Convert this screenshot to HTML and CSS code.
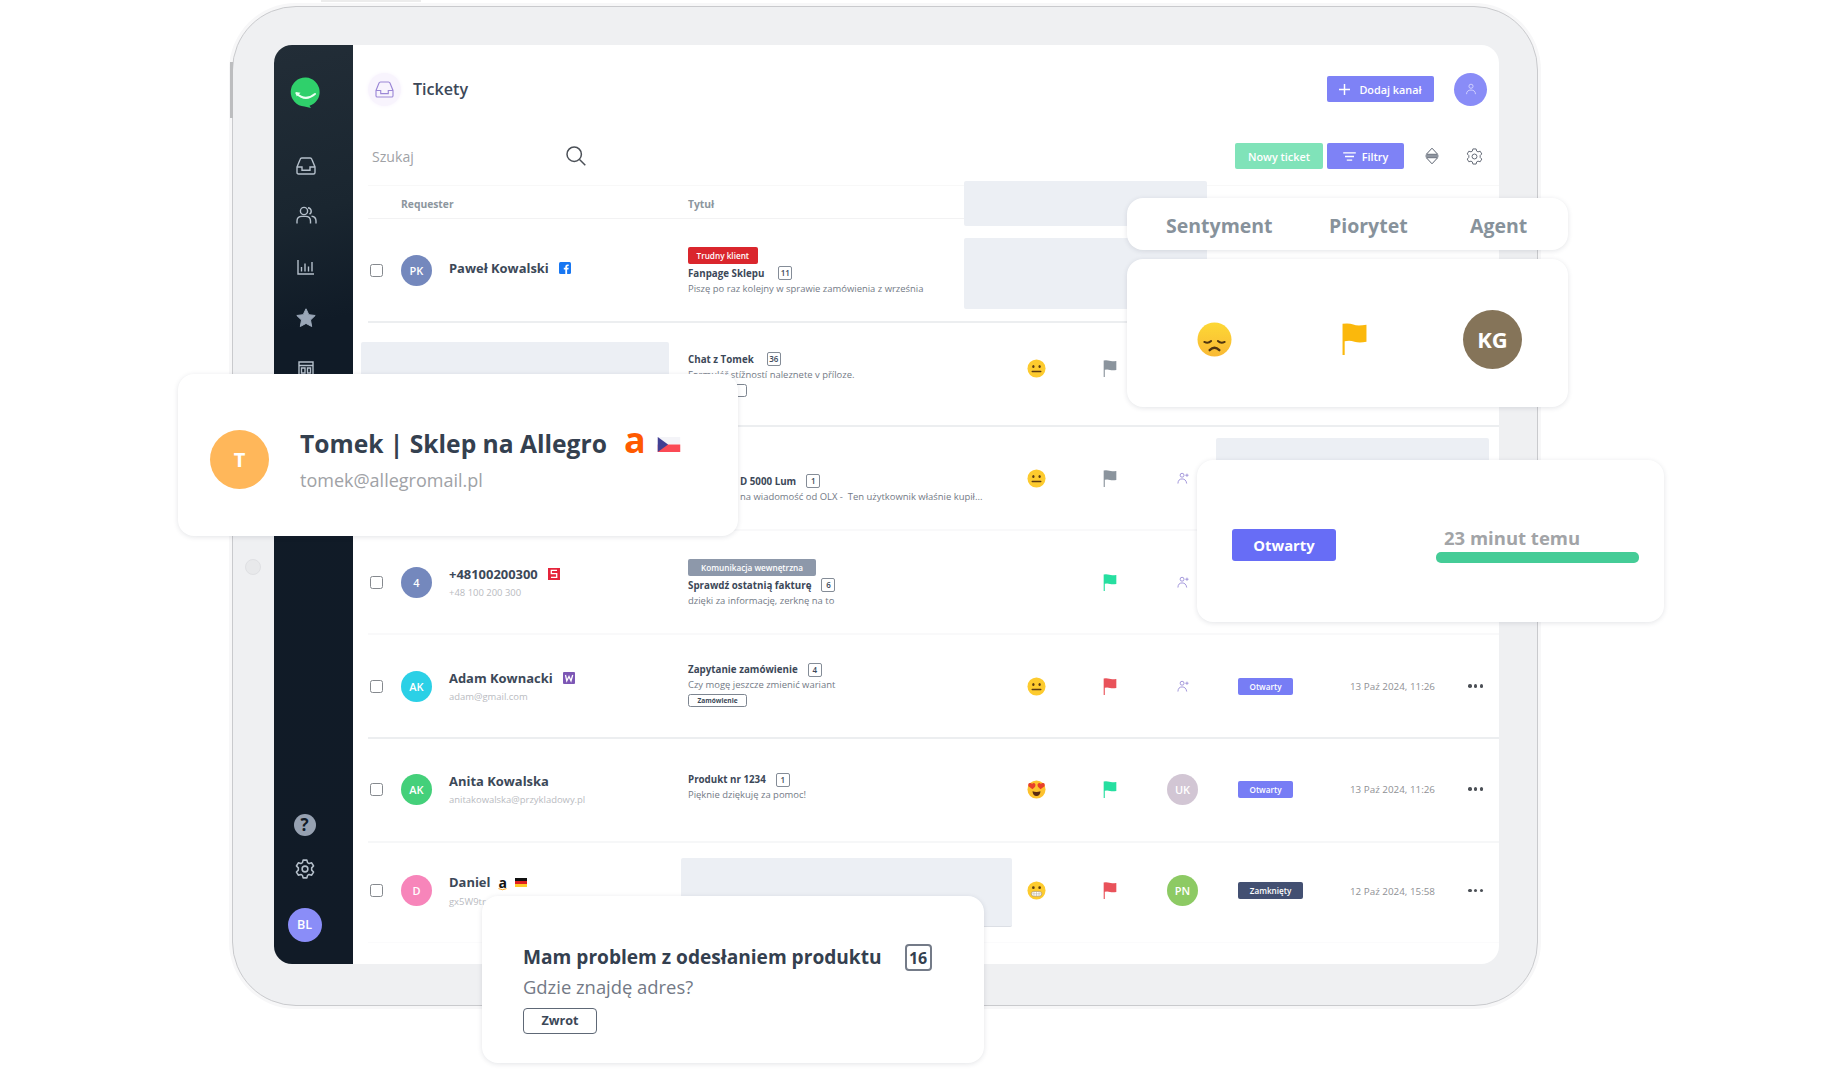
FILE: index.html
```html
<!DOCTYPE html>
<html lang="pl">
<head>
<meta charset="utf-8">
<title>Tickety</title>
<link rel="stylesheet" href="styles.css">
</head>
<body>
<svg class="sprite" aria-hidden="true">
  <symbol id="inbox" viewBox="0 0 20 18"><path d="M1 10 4.2 2.2Q4.6 1 5.8 1h8.400Q15.400 1 15.800 2.200L19 10v5.500Q19 17 17.500 17h-15Q1 17 1 15.500zM1 10h5v3.300h8V10h5"/></symbol>
  <symbol id="users" viewBox="0 0 21 18"><circle cx="8" cy="5" r="3.600"/><path d="M1 17.500v-2.500q0-4.600 5-4.600h3.500q5 0 5 4.600v2.500M12 1.700a3.500 3.500 0 0 1 1.500 6.500M15.500 10.200q4.500.3 4.500 4.800v2.500"/></symbol>
  <symbol id="chart" viewBox="0 0 17 15"><path d="M1 0v14h16M4.500 11.500V7M8 11.500V3.500M11.500 11.500V6.500M15 11.500V2"/></symbol>
  <symbol id="star" viewBox="0 0 20 20"><path d="m10 .8 2.800 5.900 6.400.8-4.700 4.500 1.200 6.500L10 15.400l-5.700 3.100 1.200-6.500L.8 7.500l6.400-.8z" stroke-linejoin="round"/></symbol>
  <symbol id="board" viewBox="0 0 16 16"><path d="M1 1h14v14H1zM1 4.500h14M3.500 7h3.500v5H3.500zM9.500 7H12.500v5H9.500z"/></symbol>
  <symbol id="gear" viewBox="0 0 18 18"><path d="m7.300 1h3.400l.6 2.300 1.400.8 2.300-.7 1.700 2.900-1.700 1.700v2l1.700 1.700-1.700 2.900-2.300-.7-1.400.8-.6 2.300H7.300l-.6-2.300-1.400-.8-2.300.7-1.700-2.900L3 10V8L1.300 6.300 3 3.400l2.300.7 1.400-.8z" stroke-linejoin="round"/><circle cx="9" cy="9" r="2.600"/></symbol>
  <symbol id="search" viewBox="0 0 20 20"><circle cx="8.200" cy="8.200" r="7.200"/><path d="m13.500 13.500 5.800 5.800"/></symbol>
  <symbol id="person" viewBox="0 0 14 14"><circle cx="7" cy="3.800" r="2.400"/><path d="M1.800 13Q2 8.200 7 8.200T12.200 13"/></symbol>
  <symbol id="assign" viewBox="0 0 13 13"><circle cx="5.500" cy="3.500" r="2.100"/><path d="M1 12.500Q1.200 7.500 5.500 7.500T10.500 12.500M9 3.500h3.500M10.800 1.800v3.400"/></symbol>
  <symbol id="sort" viewBox="0 0 14 18"><path d="M7 1.200 1.300 7.300h11.400zM7 16.800 1.300 10.700h11.400z" stroke-linejoin="round"/><path d="M.5 9h13" stroke="#8f959f" stroke-width="2"/></symbol>
  <symbol id="flag" viewBox="0 0 14 18"><path d="M.3.5Q4 0 6.300.9T13.700 1v9.500q-4 .9-6.700 0T1.500 10.300V18H.3z"/></symbol>
  <symbol id="neutral" viewBox="0 0 20 20"><circle cx="10" cy="10" r="9.500" fill="#fdcb2e"/><ellipse cx="6.700" cy="7.800" rx="1.200" ry="1.600" fill="#5b3b12"/><ellipse cx="13.300" cy="7.800" rx="1.200" ry="1.600" fill="#5b3b12"/><path d="M5.500 13.200h9" stroke="#5b3b12" stroke-width="1.500" stroke-linecap="round"/></symbol>
  <symbol id="love" viewBox="0 0 20 20"><circle cx="10" cy="10" r="9.500" fill="#fdc22e"/><path d="M5.800 9.800 1.500 6.500Q.6 3.600 3 3.200q1.600-.2 2.300 1Q6.500 2.800 8 3.500q1.800 1.300.5 3.500zM14.200 9.800l4.300-3.300q.9-2.900-1.500-3.300-1.600-.2-2.300 1-1.200-1.400-2.700-.7-1.800 1.300-.5 3.500z" fill="#e8402a"/><path d="M5.800 11.800q4.200 1.400 8.400 0-.3 5-4.200 5t-4.200-5z" fill="#5b2b12"/></symbol>
  <symbol id="grimace" viewBox="0 0 20 20"><circle cx="10" cy="10" r="9.500" fill="#fdcb2e"/><circle cx="6.700" cy="7" r="1.400" fill="#5b3b12"/><circle cx="13.300" cy="7" r="1.400" fill="#5b3b12"/><rect x="4.500" y="11" width="11" height="5" rx="2.500" fill="#fff" stroke="#a08560" stroke-width=".6"/><path d="M4.500 13.500h11M7.300 11v5M10 11v5M12.700 11v5" stroke="#b8b0a0" stroke-width=".6"/></symbol>
</svg>

<div class="stage">
  <div class="device">
    <span class="side-button"></span><span class="camera"></span><span class="top-button b1"></span><span class="top-button b2"></span>
    <div class="screen">
      <nav class="sidebar">
        <svg class="logo" viewBox="0 0 30 31"><path d="M15 .5a14.500 14.500 0 0 1 3.500 28.300L20 31l-6.500-1.500A14.500 14.500 0 0 1 15 .5z" fill="#2fd06b"/><path d="M5.500 16.500q9 8.500 18.500.5" fill="none" stroke="#eafff2" stroke-width="2" stroke-linecap="round"/><path d="m4.500 15 5 .8-3.800 3.600z" fill="#eafff2"/></svg>
        <svg class="ic nav-inbox"><use href="#inbox"/></svg>
        <svg class="ic nav-users"><use href="#users"/></svg>
        <svg class="ic nav-chart"><use href="#chart"/></svg>
        <svg class="nav-star"><use href="#star"/></svg>
        <svg class="ic nav-board"><use href="#board"/></svg>
        <span class="help">?</span>
        <svg class="ic nav-gear"><use href="#gear"/></svg>
        <span class="me">BL</span>
      </nav>
      <main class="main">
        <header class="topbar">
          <span class="title-icon"><svg><use href="#inbox"/></svg></span>
          <h1>Tickety</h1>
          <button class="btn add"><svg viewBox="0 0 12 12"><path d="M6 0v12M0 6h12"/></svg>Dodaj kanał</button>
          <span class="profile"><svg><use href="#person"/></svg></span>
        </header>
        <div class="toolbar">
          <div class="search">Szukaj<svg><use href="#search"/></svg></div>
          <button class="btn new">Nowy ticket</button>
          <button class="btn filter"><svg viewBox="0 0 14 10"><path d="M0 1h14M2 5h10M4 9h6"/></svg>Filtry</button>
          <svg class="tool sort"><use href="#sort"/></svg>
          <svg class="tool gear"><use href="#gear"/></svg>
        </div>
        <div class="table">
          <div class="row head"><span class="h-req">Requester</span><span class="h-title">Tytuł</span><i class="ph ph-head"></i></div>

          <div class="row">
            <i class="check"></i><span class="avatar blue">PK</span>
            <div class="who single"><div class="name">Paweł Kowalski<svg class="src" viewBox="0 0 12 12"><rect width="12" height="12" rx="1.500" fill="#1877f2"/><path d="M6.300 12V7.500H4.800V5.700h1.500V4.600q0-2.200 2.200-2.200h1.200v1.700H8.900q-.8 0-.8.8v.8h1.600l-.3 1.800H8.100V12z" fill="#fff"/></svg></div></div>
            <div class="topic labelled"><span class="label red">Trudny klient</span><div class="subject">Fanpage Sklepu<b class="count wide">11</b></div><p>Piszę po raz kolejny w sprawie zamówienia z września</p></div>
            <i class="ph ph-one"></i>
          </div>

          <div class="row second">
            <i></i><i></i><div class="who"></div>
            <div class="topic"><div class="subject">Chat z Tomek<b class="count wide">36</b></div><p>Formulář stížností naleznete v příloze.</p><span class="tag"></span></div>
            <svg class="emoji"><use href="#neutral"/></svg><svg class="flag grey"><use href="#flag"/></svg>
            <i class="ph ph-two"></i>
          </div>

          <div class="row faint third">
            <i></i><i></i><div class="who"></div>
            <div class="topic"><div class="subject">D 5000 Lum<b class="count">1</b></div><p>na wiadomość od OLX -&nbsp; Ten użytkownik właśnie kupił...</p></div>
            <svg class="emoji"><use href="#neutral"/></svg><svg class="flag grey"><use href="#flag"/></svg><svg class="assign"><use href="#assign"/></svg>
            <i class="ph ph-three"></i>
          </div>

          <div class="row faint">
            <i class="check"></i><span class="avatar blue">4</span>
            <div class="who"><div class="name">+48100200300<svg class="src" viewBox="0 0 12 12"><rect width="12" height="12" fill="#e5243b"/><path d="M9 2.300H3.300v3.400h5.400v3.600H3" fill="none" stroke="#fff" stroke-width="1.300"/></svg></div><small>+48 100 200 300</small></div>
            <div class="topic labelled"><span class="label slate">Komunikacja wewnętrzna</span><div class="subject">Sprawdź ostatnią fakturę<b class="count">6</b></div><p>dzięki za informację, zerknę na to</p></div>
            <i></i><svg class="flag green"><use href="#flag"/></svg><svg class="assign"><use href="#assign"/></svg>
          </div>

          <div class="row">
            <i class="check"></i><span class="avatar cyan">AK</span>
            <div class="who"><div class="name">Adam Kownacki<svg class="src" viewBox="0 0 12 12"><rect width="12" height="12" rx="1" fill="#7d57b5"/><path d="m2.500 3 1.300 5.800L6 4.500l2 4.300L9.700 3" fill="none" stroke="#fff" stroke-width="1.300"/></svg></div><small>adam@gmail.com</small></div>
            <div class="topic fifth"><div class="subject">Zapytanie zamówienie<b class="count">4</b></div><p>Czy mogę jeszcze zmienić wariant</p><span class="tag">Zamówienie</span></div>
            <svg class="emoji"><use href="#neutral"/></svg><svg class="flag red-f"><use href="#flag"/></svg><svg class="assign"><use href="#assign"/></svg>
            <span class="status">Otwarty</span><time>13 Paź 2024, 11:26</time><span class="dots"><i></i><i></i><i></i></span>
          </div>

          <div class="row faint sixth">
            <i class="check"></i><span class="avatar green-a">AK</span>
            <div class="who"><div class="name">Anita Kowalska</div><small>anitakowalska@przykladowy.pl</small></div>
            <div class="topic"><div class="subject">Produkt nr 1234<b class="count">1</b></div><p>Pięknie dziękuję za pomoc!</p></div>
            <svg class="emoji"><use href="#love"/></svg><svg class="flag green"><use href="#flag"/></svg><span class="avatar mauve">UK</span>
            <span class="status">Otwarty</span><time>13 Paź 2024, 11:26</time><span class="dots"><i></i><i></i><i></i></span>
          </div>

          <div class="row last">
            <i class="check"></i><span class="avatar pink">D</span>
            <div class="who"><div class="name">Daniel<span class="amazon">a<svg viewBox="0 0 10 3"><path d="M.5.500q4.500 2.500 9 0" fill="none" stroke="#f90" stroke-width="1"/></svg></span><svg class="de" viewBox="0 0 12 9"><path d="M0 0h12v3H0z" fill="#111"/><path d="M0 3h12v3H0z" fill="#e02020"/><path d="M0 6h12v3H0z" fill="#ffc928"/></svg></div><small>gx5W9tr</small></div>
            <div class="topic"></div>
            <svg class="emoji"><use href="#grimace"/></svg><svg class="flag red-f"><use href="#flag"/></svg><span class="avatar lime">PN</span>
            <span class="status closed">Zamknięty</span><time>12 Paź 2024, 15:58</time><span class="dots"><i></i><i></i><i></i></span>
            <i class="ph ph-last"></i>
          </div>
        </div>
      </main>
    </div>
  </div>

  <section class="card c-head"><span>Sentyment</span><span>Piorytet</span><span>Agent</span></section>

  <section class="card c-agent">
    <svg class="sad" viewBox="0 0 36 36"><defs><linearGradient id="sadfill" x1="0" y1="0" x2="0" y2="1"><stop offset="0" stop-color="#fdd835"/><stop offset="1" stop-color="#f9b934"/></linearGradient></defs><circle cx="18" cy="18" r="17.500" fill="url(#sadfill)"/><path d="M7.500 20.500q4 2 7-1M28.500 20.500q-4 2-7-1" fill="none" stroke="#4f3510" stroke-width="2" stroke-linecap="round"/><path d="M13 29q5-5 10 0" fill="none" stroke="#4f3510" stroke-width="2.400" stroke-linecap="round"/></svg>
    <svg class="flag big"><use href="#flag"/></svg>
    <span class="avatar kg">KG</span>
  </section>

  <section class="card c-tomek">
    <span class="avatar t">T</span>
    <div><h2>Tomek | Sklep na Allegro<b class="allegro">a</b><svg class="cz" viewBox="0 0 24 16"><path d="M0 0h24v8H0z" fill="#f4f4f8"/><path d="M0 8h24v8H0z" fill="#fb4a55"/><path d="m0 0 11 8L0 16z" fill="#413f93"/></svg></h2><p>tomek@allegromail.pl</p></div>
  </section>

  <section class="card c-time">
    <span class="open">Otwarty</span>
    <div class="timer"><p>23 minut temu</p><i></i></div>
  </section>

  <section class="card c-problem">
    <h2>Mam problem z odesłaniem produktu<b>16</b></h2>
    <p>Gdzie znajdę adres?</p>
    <span class="return">Zwrot</span>
  </section>
</div>
</body>
</html>
```
FILE: styles.css
```css
* { box-sizing: border-box; }
body { margin: 0; background: #fff; font-family: "Open Sans", "Noto Sans", sans-serif; color: #3c4858; }
h1, h2, p { margin: 0; }
svg { display: block; flex: none; overflow: visible; }
i { font-style: normal; }
.sprite { position: absolute; width: 0; height: 0; overflow: hidden; }
.stage { position: relative; display: flow-root; width: 1842px; height: 1090px; overflow: hidden; }

/* tablet */
.device { position: relative; z-index: 0; width: 1306px; height: 1000px; margin: 6px 0 0 232px; padding: 38px 38px 41px 41px; border: 1px solid #c9cacd; border-radius: 64px; background: #eff0f2; box-shadow: 0 0 0 3px #f7f7f8; }
.side-button { position: absolute; left: -3px; top: 55px; width: 3px; height: 56px; background: #bcbdbf; }
.camera { position: absolute; left: 12px; top: 552px; width: 16px; height: 16px; border-radius: 50%; background: #e8e9eb; border: 1px solid #dfe0e3; }
.top-button { position: absolute; top: -7px; height: 2px; background: #ececec; }
.b1 { left: 88px; width: 60px; }
.b2 { left: 148px; width: 40px; }
.screen { display: flex; width: 1225px; height: 919px; border-radius: 18px; overflow: hidden; background: #fff; }

/* sidebar */
.sidebar { width: 79px; padding: 32px 16px 22px 0; display: flex; flex-direction: column; align-items: center; background: linear-gradient(165deg, #222d37 0, #1a2630 170px, #101b27 280px, #111b27 100%); }
.ic { fill: none; stroke: #b4bfca; stroke-width: 1.4; }
.logo { width: 30px; height: 31px; }
.nav-inbox { width: 20px; height: 18px; margin-top: 49px; }
.nav-users { width: 21px; height: 18px; margin: 31px 0 0 1px; }
.nav-chart { width: 17px; height: 15px; margin-top: 36px; }
.nav-star { width: 20px; height: 20px; margin-top: 33px; fill: #9aa7b8; stroke: #9aa7b8; }
.nav-board { width: 16px; height: 16px; margin-top: 33px; }
.help { width: 22px; height: 22px; margin-top: auto; margin-right: 2px; border-radius: 50%; background: #96a1b1; color: #111b27; font-size: 17px; font-weight: 700; line-height: 22px; text-align: center; }
.nav-gear { width: 20px; height: 20px; margin: 23px 2px 0 0; }
.me { width: 34px; height: 34px; margin: 29px 2px 0 0; border-radius: 50%; background: #8a8df8; color: #fff; font-size: 12.5px; font-weight: 600; line-height: 34px; text-align: center; }

/* main area */
.main { flex: 1; }
.topbar { display: flex; align-items: center; height: 90px; padding: 0 12px 2px 15px; }
.title-icon { display: grid; place-items: center; width: 33px; height: 33px; border-radius: 50%; background: #f8f4fd; box-shadow: 0 0 4px #f8f4fd; }
.title-icon svg { width: 19px; height: 17px; fill: none; stroke: #9b87d6; stroke-width: 1.2; }
h1 { margin: 0 auto 0 12px; font-size: 16.100px; font-weight: 600; }
.btn { display: flex; align-items: center; justify-content: center; height: 26px; padding: 0; border: 0; border-radius: 2px; background: #7e82f6; color: #fff; font: 600 10.850px "Open Sans", sans-serif; }
.btn svg { fill: none; stroke: #fff; stroke-width: 1.600; }
.add { width: 107px; gap: 9px; }
.add svg { width: 11px; height: 11px; }
.profile { display: grid; place-items: center; width: 33px; height: 33px; margin-left: 20px; border-radius: 50%; background: #898cf7; }
.profile svg { width: 12px; height: 12px; fill: none; stroke: #d9daff; }
.toolbar { display: flex; align-items: center; height: 50px; padding: 0 16px 8px 19px; }
.search { display: flex; align-items: center; justify-content: space-between; width: 214px; margin-right: auto; color: #a0a2a6; font-size: 14.100px; font-weight: 500; }
.search svg { width: 20px; height: 20px; fill: none; stroke: #4b5057; stroke-width: 1.500; }
.new { width: 88px; margin-right: 4px; background: #80e3b9; }
.filter { width: 77px; gap: 6px; }
.filter svg { width: 13px; height: 9px; }
.tool { fill: none; stroke: #5c6370; }
.sort { width: 14px; height: 18px; margin-left: 21px; }
.tool.gear { width: 17px; height: 17px; margin-left: 27px; }

/* table */
.row { position: relative; display: grid; grid-template-columns: 31px 48px 239px 339px 76px 64px 71px 112px 118px 15px; align-items: center; height: 104px; margin-left: 15px; padding-left: 2px; border-bottom: 2px solid #eceef0; }
.row.faint { border-color: #f9f9fa; }
.row.sixth { padding-bottom: 2px; border-color: #f6f7f8; }
.row.last { height: 100px; padding-bottom: 4px; border-bottom: 1px solid #fbfbfc; }
.row.head { height: 34px; padding-top: 4px; border-top: 1px solid #f8f8f8; border-bottom: 1px solid #f2f2f3; color: #8c969e; font-size: 10.300px; font-weight: 700; }
.h-req { grid-column: 2 / 4; }
.h-title { grid-column: 4; }
.check { width: 13px; height: 13px; border: 1px solid #85898e; border-radius: 2.500px; }
.avatar { width: 31px; height: 31px; border-radius: 50%; color: #fff; font-size: 11px; font-weight: 600; line-height: 31px; text-align: center; }
.blue { background: #7488bd; }
.cyan { background: #2bd0e6; }
.green-a { background: #44d07a; }
.pink { background: #f785ba; }
.mauve { background: #d2c6d4; }
.lime { background: #8dca64; }
.who { margin-top: 2px; }
.who.single { margin-top: -4px; }
.name { display: flex; align-items: center; height: 19px; font-size: 12.950px; font-weight: 700; white-space: nowrap; }
.src { width: 12px; height: 12px; margin-left: 10px; }
small { display: block; height: 19px; color: #b9bbbf; font-size: 9.450px; line-height: 19px; }
.amazon { position: relative; margin-left: 8px; color: #111; font-size: 14px; font-weight: 700; }
.amazon svg { position: absolute; left: 0; bottom: 1px; width: 9px; height: 3px; }
.de { width: 12px; height: 9px; margin-left: 8px; }
.topic { display: flex; flex-direction: column; align-items: flex-start; white-space: nowrap; }
.topic.labelled { margin-top: 2px; }
.label { height: 17px; margin-bottom: 2px; padding: 0 8.500px; border-radius: 2px; color: #fff; font-size: 8.200px; font-weight: 600; line-height: 17px; }
.label.slate { padding: 0 13px; background: #8d98aa; }
.label.red { background: #da262d; }
.subject { display: flex; align-items: center; height: 15px; font-size: 9.780px; font-weight: 700; }
.count { width: 14px; height: 14px; margin-left: 10px; border: 1px solid #848c97; border-radius: 2px; font-size: 8px; font-weight: 600; line-height: 12px; text-align: center; }
.count.wide { margin-left: 14px; }
.second .count.wide { margin-left: 13px; }
.topic p { height: 15px; color: #737a86; font-size: 9.450px; line-height: 15px; }
.tag { width: 59px; height: 13px; margin-top: 2px; border: 1px solid #7d8590; border-radius: 2.500px; font-size: 6.600px; font-weight: 700; line-height: 11px; text-align: center; }
.fifth { margin-top: -3px; }
.sixth .topic { margin-top: -4px; }
.third .topic { margin-top: 21px; padding-left: 52px; }
.second .emoji, .second .flag { margin-top: -12px; }
.emoji { width: 19px; height: 19px; }
.flag { width: 14px; height: 17px; }
.grey { fill: #8b949d; }
.green { fill: #26dfa0; }
.red-f { fill: #e9525a; }
.assign { width: 12px; height: 12px; margin-left: 10px; fill: none; stroke: #9c8fd8; }
.status { justify-self: start; width: 55px; height: 17px; border-radius: 2px; background: #777df5; color: #fff; font-size: 8.150px; font-weight: 600; line-height: 17px; text-align: center; }
.status.closed { width: 65px; background: #435072; }
time { color: #8f9195; font-size: 9.830px; white-space: nowrap; }
.dots { display: flex; justify-content: space-between; }
.dots i { width: 3.500px; height: 3.500px; border-radius: 50%; background: #4c5056; }
/* blank panels laid over hidden cells */
.ph { position: absolute; background: #eceff4; border-radius: 2px; }
.ph-head { left: 596px; top: -5px; width: 243px; height: 45px; z-index: 1; }
.ph-one { left: 596px; top: 19px; width: 243px; height: 71px; }
.ph-two { left: -7px; top: 19px; width: 308px; height: 60px; }
.ph-three { left: 848px; top: 11px; width: 273px; height: 60px; }
.ph-last { left: 313px; top: 15px; width: 331px; height: 69px; border-bottom: 1px solid #dcdfe5; }

/* floating cards */
.card { position: absolute; border-radius: 16px; background: #fff; box-shadow: 0 1px 5px rgba(40, 50, 70, .13); }
.c-head { left: 1127px; top: 198px; width: 441px; height: 52px; display: grid; grid-template-columns: 163px 141px 1fr; align-items: center; padding: 3px 0 0 39px; color: #87929b; font-size: 19.500px; font-weight: 700; }
.c-agent { left: 1127px; top: 259px; width: 441px; height: 148px; display: flex; align-items: center; padding: 12px 46px 0 70px; }
.sad { width: 35px; height: 35px; }
.flag.big { width: 25px; height: 34px; margin: 0 auto 0 110px; fill: #fbb80c; }
.kg { width: 59px; height: 59px; background: #857459; font-size: 22px; font-weight: 700; line-height: 59px; }
.c-tomek { left: 178px; top: 374px; width: 560px; height: 162px; display: flex; align-items: center; gap: 31px; padding: 8px 0 0 32px; }
.c-tomek > div { padding-top: 5px; }
.avatar.t { width: 59px; height: 59px; background: #ffb75a; font-size: 20px; line-height: 59px; font-weight: 700; }
.c-tomek h2 { display: flex; align-items: center; height: 37px; font-size: 24.620px; font-weight: 700; white-space: nowrap; color: #34404f; }
.allegro { margin-left: 17px; color: #ff5a00; font-size: 36px; line-height: 40px; height: 46px; font-weight: 700; }
.cz { width: 24px; height: 15px; margin: 2px 0 0 11px; }
.c-tomek p { height: 37px; line-height: 37px; font-size: 18px; color: #a0a2a6; }
.c-time { left: 1197px; top: 460px; width: 467px; height: 162px; display: flex; padding: 69px 25px 0 35px; justify-content: space-between; align-items: flex-start; }
.open { width: 104px; height: 32px; border-radius: 3px; background: #676df6; color: #fff; font-size: 14.800px; font-weight: 700; line-height: 33px; text-align: center; }
.timer { width: 203px; }
.timer p { height: 23px; padding-left: 8px; color: #a2a4a7; font-size: 18.490px; line-height: 18px; font-weight: 700; }
.timer i { display: block; height: 11px; border-radius: 5px; background: #45cc97; }
.c-problem { left: 482px; top: 896px; width: 502px; height: 167px; padding: 45px 0 0 41px; }
.c-problem h2 { display: flex; align-items: center; height: 32px; font-size: 19.130px; font-weight: 700; white-space: nowrap; color: #34404f; }
.c-problem b { width: 27px; height: 27px; margin-left: 23px; border: 2px solid #747b88; border-radius: 4px; font-size: 16px; font-weight: 700; line-height: 24px; text-align: center; }
.c-problem p { height: 30px; color: #737986; font-size: 18.400px; line-height: 28px; }
.return { display: block; width: 74px; height: 26px; margin-top: 5px; border: 1.500px solid #5e6876; border-radius: 4px; font-size: 12.600px; font-weight: 700; line-height: 23px; text-align: center; }
```
